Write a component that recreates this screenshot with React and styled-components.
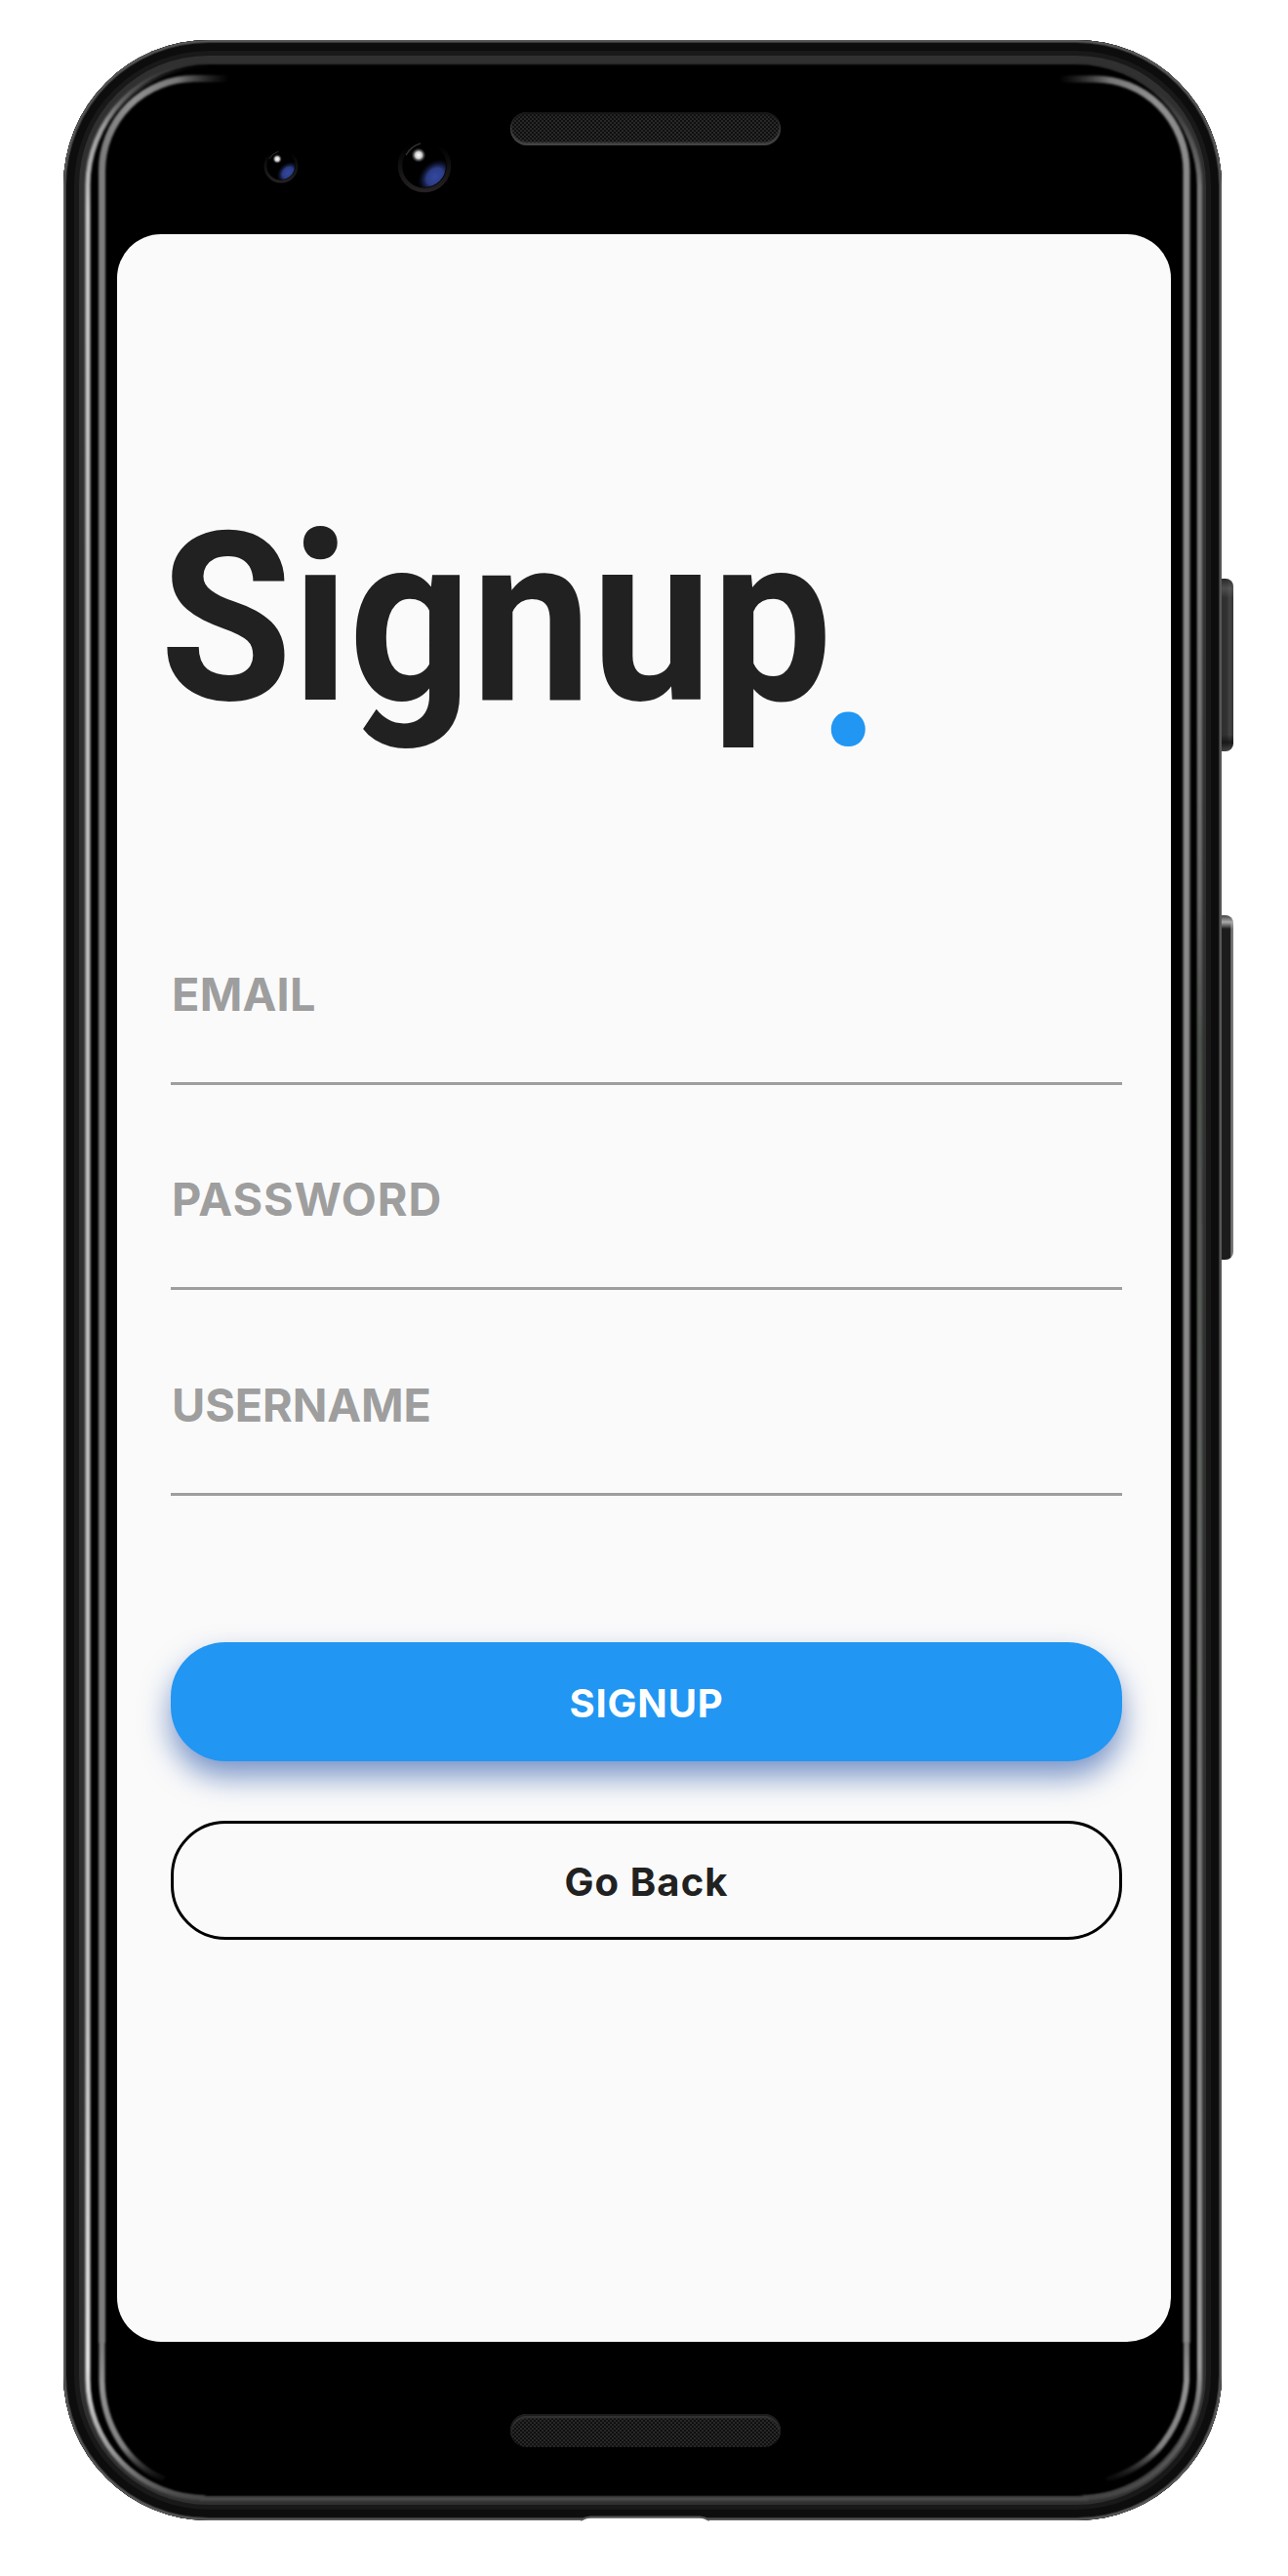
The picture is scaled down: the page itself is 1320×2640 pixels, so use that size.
import React from "react";
import styled, { createGlobalStyle } from "styled-components";

const GlobalStyle = createGlobalStyle`
  html, body { margin: 0; padding: 0; background: #fff; }
  *, *::before, *::after { box-sizing: border-box; }
`;

const Stage = styled.main`
  width: 1320px;
  height: 2640px;
  padding: 41px 68px 57px 65px;
  background: #fff;
  overflow: hidden;
`;

const Phone = styled.section`
  position: relative;
  display: grid;
  grid-template-rows: 199px 2160px 183px;
  justify-items: center;
  width: 1187px;
  height: 2542px;
  border-radius: 149px;
  background: #000;
  box-shadow:
    inset 0 0 1px 2px #595959,
    inset 0 0 1px 3px #383838,
    inset 0 0 0 11px #0d0d0d,
    inset 0 0 0 16px #191919,
    inset 0 0 2px 25px #303030;
`;

const SideButton = styled.span`
  position: absolute;
  left: 1187px;
  top: ${(p) => p.$top}px;
  width: 12px;
  height: ${(p) => p.$height}px;
  border-radius: 0 8px 8px 0;
  background: ${(p) => p.$fill};
`;

const PortNotch = styled.svg`
  position: absolute;
  left: 527px;
  top: 2535px;
`;

const Reflections = styled.svg`
  position: absolute;
  inset: 0;
  pointer-events: none;
`;

const TopBezel = styled.header`
  display: flex;
  align-items: flex-start;
  width: 100%;
  padding-left: 205px;
`;

const Lens = styled.svg`
  flex: none;
  margin: ${(p) => p.$margin};
`;

const Speaker = styled.div`
  width: 277px;
  height: 34px;
  border-radius: 17px;
  margin: ${(p) => p.$margin};
  background: repeating-conic-gradient(#0f0f0f 0 25%, #282828 0 50%) 0 0 / 4px 4px;
  box-shadow: ${(p) =>
    p.$lit === "bottom"
      ? "inset 0 -2px 2px 1px #444, inset 0 2px 2px 0 #161616"
      : "inset 0 1px 1px 1px #1c1c1c, inset 0 3px 2px 1px #383838"};
`;

const Screen = styled.div`
  width: 1080px;
  height: 2160px;
  margin-left: 3px;
  padding: 273px 50px 0 55px;
  border-radius: 45px;
  background: #fafafa;
  font-family: Inter, "Open Sans", sans-serif;
`;

const Title = styled.h1`
  margin: 0 0 0 -11.5px;
  height: 242px;
  font: 700 242px/242px Roboto, sans-serif;
  color: #212121;
  white-space: nowrap;
  transform: scaleX(0.908);
  transform-origin: 0 50%;
`;

const Dot = styled.span`
  display: inline-block;
  height: 0;
  line-height: 0;
  color: #2196f3;
  transform: translate(-16px, 47px);
`;

const Form = styled.form`
  display: flex;
  flex-direction: column;
  margin-top: 146px;
`;

const Field = styled.label`
  display: flex;
  align-items: flex-end;
  height: 210.5px;
  padding: 0 0 62px 1px;
  border-bottom: 3px solid #9e9e9e;
  font-size: 46.8px;
  font-weight: 700;
  line-height: 56px;
  letter-spacing: ${(p) => p.$tracking}px;
  color: #9e9e9e;
`;

const Actions = styled.div`
  display: grid;
  gap: 61px;
  margin-top: 150.5px;
`;

const Button = styled.button`
  height: 122px;
  padding: 3px 0 0;
  border: ${(p) => (p.$outline ? "3px solid #000" : "0")};
  border-radius: 56px;
  background: ${(p) => (p.$outline ? "transparent" : "#2196f3")};
  box-shadow: ${(p) => (p.$outline ? "none" : "0 16px 30px rgba(20, 70, 160, 0.56)")};
  font: 700 40px/48px Inter, "Open Sans", sans-serif;
  letter-spacing: ${(p) => p.$tracking}px;
  color: ${(p) => (p.$outline ? "#212121" : "#fff")};
`;

function Camera({ r, id, margin }) {
  const s = r * 2;
  return (
    <Lens $margin={margin} width={s} height={s} viewBox="-28 -28 56 56">
      <defs>
        <radialGradient id={`${id}-blue`}>
          <stop offset="0" stopColor="#3448a0" />
          <stop offset="0.5" stopColor="#2c3c85" />
          <stop offset="1" stopColor="#10183a" stopOpacity="0" />
        </radialGradient>
        <radialGradient id={`${id}-glint`}>
          <stop offset="0" stopColor="#fff" />
          <stop offset="0.45" stopColor="#cfcfcf" />
          <stop offset="1" stopColor="#555" stopOpacity="0" />
        </radialGradient>
        <linearGradient id={`${id}-rim`} x1="0" y1="0" x2="0" y2="1">
          <stop offset="0.1" stopColor="#000" />
          <stop offset="0.5" stopColor="#111" />
          <stop offset="1" stopColor="#252022" />
        </linearGradient>
        <clipPath id={`${id}-clip`}>
          <circle r="22" />
        </clipPath>
      </defs>
      <circle r="25" fill="#000" stroke={`url(#${id}-rim)`} strokeWidth="4.5" />
      <g clipPath={`url(#${id}-clip)`}>
        <ellipse cx="11" cy="11" rx="20" ry="15" transform="rotate(-45 11 11)" fill={`url(#${id}-blue)`} />
      </g>
      <path d="M-19 -11Q-14 -20 -4 -23" fill="none" stroke="#303030" strokeWidth="1.5" />
      <circle cx="-6" cy="-11" r="7.5" fill={`url(#${id}-glint)`} />
    </Lens>
  );
}

function EdgeReflections() {
  return (
    <Reflections width="1187" height="2542" viewBox="65 41 1187 2542">
      <defs>
        <filter id="soft" filterUnits="userSpaceOnUse" x="65" y="41" width="1187" height="2542">
          <feGaussianBlur stdDeviation="1.1" />
        </filter>
        <linearGradient id="outerLeft" gradientUnits="userSpaceOnUse" x1="0" y1="67" x2="0" y2="2562">
          <stop offset="0" stopColor="#bbb" stopOpacity="0" />
          <stop offset="0.025" stopColor="#bbb" stopOpacity="0.8" />
          <stop offset="0.06" stopColor="#c8c8c8" />
          <stop offset="0.2" stopColor="#c0c0c0" />
          <stop offset="0.8" stopColor="#c0c0c0" />
          <stop offset="0.945" stopColor="#e4e4e4" />
          <stop offset="0.98" stopColor="#999" />
          <stop offset="1" stopColor="#444" />
        </linearGradient>
        <linearGradient id="outerRight" gradientUnits="userSpaceOnUse" x1="0" y1="67" x2="0" y2="2562">
          <stop offset="0.01" stopColor="#777" stopOpacity="0" />
          <stop offset="0.05" stopColor="#777" />
          <stop offset="0.2" stopColor="#7c7c7c" />
          <stop offset="0.34" stopColor="#6a6a6a" />
          <stop offset="0.4" stopColor="#4d514d" />
          <stop offset="0.5" stopColor="#565a56" />
          <stop offset="0.8" stopColor="#808080" />
          <stop offset="0.945" stopColor="#999" />
          <stop offset="0.975" stopColor="#606060" />
          <stop offset="1" stopColor="#444" />
        </linearGradient>
        <linearGradient id="innerLeft" gradientUnits="userSpaceOnUse" x1="104" y1="0" x2="235" y2="0">
          <stop offset="0" stopColor="#7c7c7c" />
          <stop offset="0.25" stopColor="#909090" />
          <stop offset="0.6" stopColor="#777" />
          <stop offset="1" stopColor="#444" stopOpacity="0" />
        </linearGradient>
        <linearGradient id="innerRight" gradientUnits="userSpaceOnUse" x1="1216" y1="0" x2="1085" y2="0">
          <stop offset="0" stopColor="#8a8a8a" />
          <stop offset="0.25" stopColor="#909090" />
          <stop offset="0.6" stopColor="#777" />
          <stop offset="1" stopColor="#444" stopOpacity="0" />
        </linearGradient>
        <linearGradient id="innerFoot" gradientUnits="userSpaceOnUse" x1="0" y1="2400" x2="0" y2="2544">
          <stop offset="0" stopColor="#7c7c7c" />
          <stop offset="0.3" stopColor="#929292" />
          <stop offset="0.75" stopColor="#808080" />
          <stop offset="1" stopColor="#555" stopOpacity="0" />
        </linearGradient>
      </defs>
      <g fill="none" filter="url(#soft)">
        <path d="M213 67A123 123 0 0 0 90 190V2438A120 122 0 0 0 210 2560" stroke="url(#outerLeft)" strokeWidth="5" />
        <path d="M1104 67A125.500 123 0 0 1 1229.500 190V2438A120 122 0 0 1 1109.500 2560" stroke="url(#outerRight)" strokeWidth="5" />
        <path d="M205 2561H1115" stroke="#484848" strokeWidth="4" />
        <path d="M235 80.500H199A94.500 94.500 0 0 0 104.500 175V2401" stroke="url(#innerLeft)" strokeWidth="7" />
        <path d="M1085 81H1122A94 94 0 0 1 1216 175V2401" stroke="url(#innerRight)" strokeWidth="7" />
        <path d="M104.500 2400V2440A96 110 0 0 0 168 2541" stroke="url(#innerFoot)" strokeWidth="6" />
        <path d="M1216 2400V2440Q1213 2480 1186 2511Q1167 2531 1134 2542" stroke="url(#innerFoot)" strokeWidth="6" />
      </g>
    </Reflections>
  );
}

const fields = [
  { label: "EMAIL", tracking: 0.2 },
  { label: "PASSWORD", tracking: 0.9 },
  { label: "USERNAME", tracking: -0.1 },
];

export default function App() {
  return (
    <>
      <GlobalStyle />
      <Stage>
        <Phone>
          <EdgeReflections />
          <SideButton
            $top={552}
            $height={177}
            $fill="linear-gradient(#2228, #6668 10px, transparent 20px, transparent 160px, #111c 168px, #5558), linear-gradient(90deg, #303030 40%, #444 70%, #333)"
          />
          <SideButton
            $top={897}
            $height={353}
            $fill="linear-gradient(#444, #aaa 7px, transparent 14px), linear-gradient(90deg, #1c1c1c 72%, #777 82%, #777)"
          />
          <TopBezel>
            <Camera r={18} id="small" margin="110.5px 0 0" />
            <Camera r={28} id="large" margin="100.500px 0 0 100.500px" />
            <Speaker $lit="bottom" $margin="74px 0 0 60.500px" />
          </TopBezel>
          <Screen>
            <Title>
              Signup<Dot>.</Dot>
            </Title>
            <Form onSubmit={(e) => e.preventDefault()}>
              {fields.map((f) => (
                <Field key={f.label} $tracking={f.tracking}>
                  {f.label}
                </Field>
              ))}
              <Actions>
                <Button $tracking={0.8}>SIGNUP</Button>
                <Button $outline type="button" $tracking={1.1}>
                  Go Back
                </Button>
              </Actions>
            </Form>
          </Screen>
          <Speaker $lit="top" $margin="74px 0 0 6px" />
          <PortNotch width="138" height="8" viewBox="0 0 138 8">
            <path d="M3 8Q8 4.500 13 4.500H125Q130 4.500 135 8Z" fill="#fff" />
            <path d="M3 7Q8 3.500 13 3.500H125Q130 3.500 135 7" fill="none" stroke="#555" strokeWidth="2" />
          </PortNotch>
        </Phone>
      </Stage>
    </>
  );
}
